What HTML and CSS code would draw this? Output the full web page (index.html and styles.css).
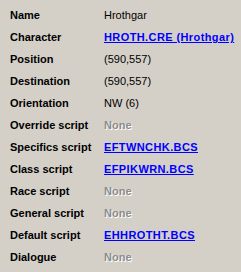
FILE: index.html
```
<!DOCTYPE html>
<html lang="en">

<head>
    <meta charset="UTF-8">
    <title>Creature</title>
    <link rel="stylesheet" href="styles.css">
</head>

<body>
    <dl class="props">
        <dt>Name</dt>
        <dd>Hrothgar</dd>
        <dt>Character</dt>
        <dd><a href="#">HROTH.CRE (Hrothgar)</a></dd>
        <dt>Position</dt>
        <dd>(590,557)</dd>
        <dt>Destination</dt>
        <dd>(590,557)</dd>
        <dt>Orientation</dt>
        <dd>NW (6)</dd>
        <dt>Override script</dt>
        <dd class="none">None</dd>
        <dt>Specifics script</dt>
        <dd><a href="#">EFTWNCHK.BCS</a></dd>
        <dt>Class script</dt>
        <dd><a href="#">EFPIKWRN.BCS</a></dd>
        <dt>Race script</dt>
        <dd class="none">None</dd>
        <dt>General script</dt>
        <dd class="none">None</dd>
        <dt>Default script</dt>
        <dd><a href="#">EHHROTHT.BCS</a></dd>
        <dt>Dialogue</dt>
        <dd class="none">None</dd>
    </dl>
</body>

</html>
```
FILE: styles.css
```
html,
body {
    margin: 0;
    padding: 0;
    background: #d4d0c8;
}

.props {
    display: grid;
    grid-template-columns: 94px auto;
    grid-auto-rows: 22px;
    margin: 0;
    padding: 4px 0 0 10px;
    font-family: "Liberation Sans", Arial, sans-serif;
    font-size: 11px;
    line-height: 22px;
    color: #000;
}

.props dt {
    font-weight: bold;
    white-space: nowrap;
}

.props dd {
    margin: 0;
    white-space: nowrap;
}

.props a {
    color: #0000ff;
    font-weight: bold;
    text-decoration: underline;
    letter-spacing: 0.4px;
}

.props dd.none {
    color: #8c8c8c;
    font-weight: bold;
    text-shadow: 1px 1px 0 #fff;
}
```
